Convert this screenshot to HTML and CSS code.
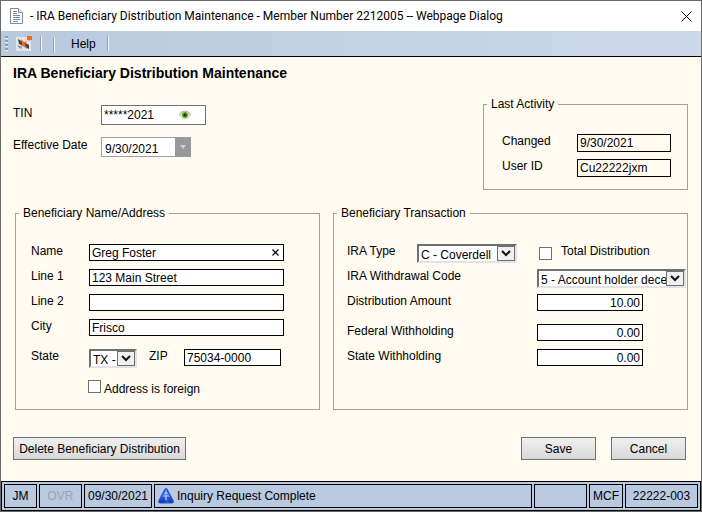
FILE: index.html
```html
<!DOCTYPE html>
<html lang="en">
<head>
    <meta charset="UTF-8">
    <meta name="viewport" content="width=device-width, initial-scale=1.0">
    <title>IRA Beneficiary Distribution Maintenance</title>
    <link rel="stylesheet" href="styles.css">
</head>
<body>
    <div class="dialog">
        <header class="title-bar">
            <svg class="page-icon" width="13" height="16" viewBox="0 0 13 16">
                <path d="M.5.5h8l4 4v11H.5z" fill="#fff" stroke="#8a8a8a"/>
                <path d="M8.5.5v4h4" fill="#eee" stroke="#8a8a8a"/>
                <path d="M3 3.5h4M3 5.5h4M3 7.5h7M3 9.5h7M3 11.5h7M3 13.5h5" stroke="#5f8fc0"/>
            </svg>
            <span class="title">- IRA Beneficiary Distribution Maintenance - Member Number 2212005 -- Webpage Dialog</span>
            <button type="button" class="close" aria-label="Close">
                <svg width="11" height="11" viewBox="0 0 11 11"><path d="M.5.5l10 10M10.5.5l-10 10" stroke="#000" fill="none"/></svg>
            </button>
        </header>

        <nav class="toolbar">
            <span class="grip"></span>
            <button type="button" class="tool" aria-label="Exit">
                <svg width="16" height="16" viewBox="0 0 16 16">
                    <path d="M0 1h11v4h4v10H0z" fill="#e4e4e4"/>
                    <path d="M2 3l5 3 1 4-5-2zM8 6l5 3v4l-4-2z" fill="#3f4650"/>
                    <path d="M2 9l4 2-1 2-3-2z" fill="#6fa2d0"/>
                    <path d="M5 3l3 3 3-1-2 3 2 5-4-3-2 1 1-3z" fill="#f26a1b"/>
                    <path d="M11 0h5v4h-5z" fill="#ff6a00"/>
                </svg>
            </button>
            <span class="separator"></span>
            <span class="separator low"></span>
            <button type="button" class="help">Help</button>
            <span class="separator"></span>
        </nav>

        <main>
            <h1>IRA Beneficiary Distribution Maintenance</h1>

            <div class="top">
                <div class="member">
                    <label for="tin">TIN</label>
                    <div class="field">
                        <input type="text" id="tin" class="tin" value="*****2021">
                        <button type="button" class="eye" aria-label="Show TIN">
                            <svg width="12" height="10" viewBox="0 0 12 10">
                                <path d="M0 5.500Q1 1 6 1Q11 1 12 5.500Q9 9.500 6 9.500Q3 9.500 0 5.500z" fill="#e6dccf"/>
                                <path d="M0 5Q2 1 6 1Q10 1 12 5" fill="none" stroke="#c4aa90"/>
                                <circle cx="6" cy="5" r="3" fill="#5aa02c"/>
                                <circle cx="6" cy="5" r="1.5" fill="#173c0a"/>
                            </svg>
                        </button>
                    </div>
                    <label for="effective">Effective Date</label>
                    <div class="field date">
                        <select id="effective" disabled>
                            <option>9/30/2021</option>
                        </select>
                        <span class="arrow"><svg width="6" height="4" viewBox="0 0 6 4"><path d="M0 0h6L3 4z" fill="#c9d3dc"/></svg></span>
                    </div>
                </div>

                <fieldset>
                    <legend>Last Activity</legend>
                    <div class="activity">
                        <label for="changed">Changed</label>
                        <input type="text" id="changed" value="9/30/2021" readonly>
                        <label for="user">User ID</label>
                        <input type="text" id="user" value="Cu22222jxm" readonly>
                    </div>
                </fieldset>
            </div>

            <div class="panels">
                <fieldset>
                    <legend>Beneficiary Name/Address</legend>
                    <div class="address">
                        <label for="name">Name</label>
                        <div class="field">
                            <input type="text" id="name" value="Greg Foster">
                            <button type="button" class="clear" aria-label="Clear">
                                <svg width="7" height="7" viewBox="0 0 7 7"><path d="M.5.5l6 6M6.500.5l-6 6" stroke="#000" stroke-width="1.2"/></svg>
                            </button>
                        </div>
                        <label for="line1">Line 1</label>
                        <input type="text" id="line1" value="123 Main Street">
                        <label for="line2">Line 2</label>
                        <input type="text" id="line2">
                        <label for="city">City</label>
                        <input type="text" id="city" value="Frisco">
                    </div>
                    <div class="state-row">
                        <label for="state">State</label>
                        <div class="field select state">
                            <select id="state"><option>TX - Texas</option></select>
                            <span class="arrow"><svg width="10" height="7" viewBox="0 0 10 7"><path d="M1 1l4 4 4-4" fill="none" stroke="#111" stroke-width="2"/></svg></span>
                        </div>
                        <label for="zip">ZIP</label>
                        <input type="text" id="zip" value="75034-0000">
                    </div>
                    <div class="foreign">
                        <input type="checkbox" id="foreign">
                        <label for="foreign">Address is foreign</label>
                    </div>
                </fieldset>

                <fieldset>
                    <legend>Beneficiary Transaction</legend>
                    <div class="type-row">
                        <label for="type">IRA Type</label>
                        <div class="field select">
                            <select id="type"><option>C - Coverdell</option></select>
                            <span class="arrow"><svg width="10" height="7" viewBox="0 0 10 7"><path d="M1 1l4 4 4-4" fill="none" stroke="#111" stroke-width="2"/></svg></span>
                        </div>
                        <input type="checkbox" id="total">
                        <label for="total">Total Distribution</label>
                    </div>
                    <div class="transaction">
                        <label for="code">IRA Withdrawal Code</label>
                        <div class="field select">
                            <select id="code"><option>5 - Account holder deceased</option></select>
                            <span class="arrow"><svg width="10" height="7" viewBox="0 0 10 7"><path d="M1 1l4 4 4-4" fill="none" stroke="#111" stroke-width="2"/></svg></span>
                        </div>
                        <label for="amount">Distribution Amount</label>
                        <input type="text" id="amount" class="money" value="10.00">
                    </div>
                    <div class="transaction withholding">
                        <label for="federal">Federal Withholding</label>
                        <input type="text" id="federal" class="money" value="0.00">
                        <label for="stateTax">State Withholding</label>
                        <input type="text" id="stateTax" class="money" value="0.00">
                    </div>
                </fieldset>
            </div>

            <div class="actions">
                <button type="button" class="btn wide">Delete Beneficiary Distribution</button>
                <button type="button" class="btn">Save</button>
                <button type="button" class="btn">Cancel</button>
            </div>
        </main>

        <footer class="status-bar">
            <span>JM</span>
            <span class="off">OVR</span>
            <span>09/30/2021</span>
            <span class="message">
                <svg width="16" height="16" viewBox="0 0 16 16">
                    <path d="M6.500 1Q8-1 9.500 1L16 13Q16 15.500 14 15.500H2Q0 15.500 0 13z" fill="#2456d6"/>
                    <path d="M8 1l4 8H4z" fill="#5d8df0"/>
                    <path d="M1 13l4-2 3 2-3 2H2zM15 13l-3-2-2 2 2 2h2z" fill="#1a3fae"/>
                    <path d="M7.500 4h1v2h-1zM7.500 7h1v5h-1z" fill="#e8f0ff"/>
                </svg>
                Inquiry Request Complete
            </span>
            <span></span>
            <span>MCF</span>
            <span>22222-003</span>
        </footer>
    </div>
</body>
</html>
```
FILE: styles.css
```css
* {
    box-sizing: border-box;
}

body {
    margin: 0;
    font-family: "Liberation Sans", Arial, sans-serif;
    font-size: 12px;
    line-height: 14px;
    color: #000;
}

.dialog {
    display: flex;
    flex-direction: column;
    min-height: 100vh;
    border: 1px solid #6b6b6b;
    background-color: #fffbf0;
}

input, select, button {
    margin: 0;
    font: inherit;
    color: inherit;
}

button {
    padding: 0;
    border: none;
    background: none;
}

svg {
    display: block;
}

/* Title bar */
.title-bar {
    display: flex;
    align-items: center;
    height: 30px;
    padding: 0 9px;
    background-color: #fff;
    font-family: Roboto, sans-serif;
}

.title {
    flex: 1;
    margin-left: 7px;
    white-space: nowrap;
}

/* Toolbar */
.toolbar {
    display: flex;
    align-items: center;
    height: 26px;
    padding: 0 4px;
    border-bottom: 1px solid #000;
    background: linear-gradient(to right, #b8c9de, #cdd9e8);
}

.grip {
    width: 3px;
    height: 15px;
    background: repeating-linear-gradient(#8e9bad 0 2px, #e6ecf4 2px 3px, transparent 3px 4px);
}

.tool {
    margin: 0 8px;
}

.separator {
    width: 2px;
    height: 15px;
    border-left: 1px solid #a0a0a0;
    border-right: 1px solid #f4f4f4;
}

.low {
    margin: 3px 0 0 11px;
}

.help {
    margin: 0 11px 0 16px;
}

/* Form */
main {
    flex: 1;
    padding: 8px 12px 20px;
}

h1 {
    margin: 0;
    font-size: 14px;
    line-height: 16px;
}

.top {
    display: flex;
    justify-content: space-between;
    align-items: flex-start;
    margin: 16px 1px 0 0;
}

.member {
    display: grid;
    grid-template-columns: 88px auto;
    row-gap: 12px;
    justify-items: start;
    margin-top: 8px;
}

.member label {
    line-height: 16px;
}

.field {
    position: relative;
}

input[type="text"] {
    width: 100%;
    height: 17px;
    padding: 0 2px;
    border: 1px solid #000;
    border-radius: 0;
    background-color: #fff;
    line-height: 15px;
}

.member .tin {
    width: 105px;
    height: 20px;
    border-color: #707070;
}

.eye, .clear {
    position: absolute;
    top: 5px;
    right: 15px;
}

.clear {
    right: 5px;
}

select {
    display: block;
    appearance: none;
    width: 100%;
    height: 19px;
    padding: 2px 0 0 2px;
    border: 2px solid;
    border-color: #707070 #e3e3e3 #e3e3e3 #707070;
    border-radius: 0;
    background-color: #fff;
    opacity: 1;
}

.arrow {
    position: absolute;
    top: 2px;
    right: 2px;
    bottom: 2px;
    display: flex;
    justify-content: center;
    align-items: center;
    width: 18px;
    border: 1px solid #707070;
    background-color: #f0f0f0;
    pointer-events: none;
}

.date {
    width: 90px;
}

.date select {
    height: 20px;
    padding: 4px 0 0 3px;
    border: 1px solid #a0a0a0;
}

.date .arrow {
    top: 0;
    right: 0;
    bottom: 0;
    width: 16px;
    border: none;
    background-color: #999;
}

fieldset {
    min-width: 0;
    margin: 0;
    padding: 0 3px;
    border: 1px solid #a0a0a0;
}

legend {
    padding: 0 4px;
}

.activity {
    display: grid;
    grid-template-columns: 75px 94px;
    row-gap: 7px;
    margin: 23px 13px 12px 15px;
}

.activity input[type="text"] {
    height: 18px;
    background-color: #fffbf0;
}

.panels {
    display: grid;
    grid-template-columns: 305fr 355fr;
    gap: 13px;
    margin: 16px 1px 0 2px;
}

.address {
    display: grid;
    grid-template-columns: 58px 1fr;
    row-gap: 8px;
    margin: 24px 32px 0 12px;
}

.state-row {
    display: grid;
    grid-template-columns: 58px 60px 35px 1fr;
    margin: 13px 35px 0 12px;
}

.state {
    width: 48px;
}

.foreign {
    display: flex;
    gap: 3px;
    margin: 12px 0 13px 69px;
}

.foreign label {
    margin-top: 2px;
}

input[type="checkbox"] {
    appearance: none;
    width: 13px;
    height: 13px;
    border: 1px solid #707070;
    background-color: #fff;
}

input[type="checkbox"]:checked {
    background-color: #333;
}

.type-row {
    display: grid;
    grid-template-columns: 70px 100px 44px auto;
    margin: 24px 0 0 10px;
}

.type-row input {
    margin: 3px 0 0 22px;
}

.transaction {
    display: grid;
    grid-template-columns: 190px 1fr;
    row-gap: 6px;
    margin: 6px 0 0 10px;
}

.transaction .select {
    margin-right: -2px;
}

.transaction .money {
    width: 106px;
    text-align: right;
}

.withholding {
    row-gap: 8px;
    margin-top: 13px;
}

.actions {
    display: flex;
    gap: 15px;
    margin: 27px 3px 0 0;
}

.btn {
    width: 75px;
    height: 23px;
    border: 1px solid #707070;
    background: linear-gradient(#f0f0f0, #d8d8d8);
}

.wide {
    width: 173px;
    margin-right: auto;
}

/* Status bar */
.status-bar {
    display: grid;
    grid-template-columns: 33px 43px 68px 1fr 53px 34px 73px;
    gap: 2px;
    padding: 2px;
    border: 1px solid #000;
    background-color: #b8c9e0;
}

.status-bar span {
    display: flex;
    justify-content: center;
    align-items: center;
    height: 24px;
    border: 1px solid #000;
}

.status-bar .message {
    justify-content: flex-start;
    gap: 3px;
    padding-left: 3px;
}

.status-bar .off {
    color: #a0a4aa;
}
```
